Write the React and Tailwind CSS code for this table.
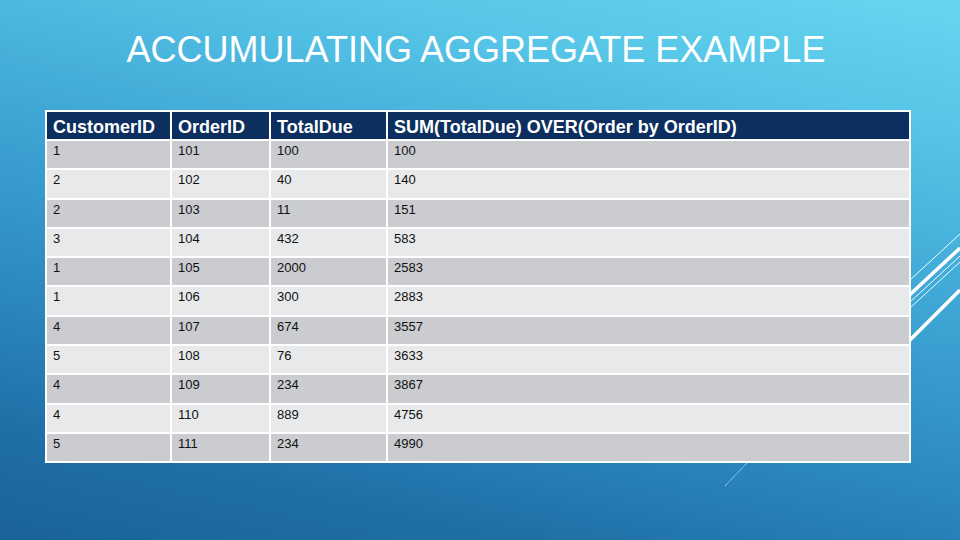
import React from "react";

const rows = [
  ["1", "101", "100", "100"],
  ["2", "102", "40", "140"],
  ["2", "103", "11", "151"],
  ["3", "104", "432", "583"],
  ["1", "105", "2000", "2583"],
  ["1", "106", "300", "2883"],
  ["4", "107", "674", "3557"],
  ["5", "108", "76", "3633"],
  ["4", "109", "234", "3867"],
  ["4", "110", "889", "4756"],
  ["5", "111", "234", "4990"],
];

const headers = ["CustomerID", "OrderID", "TotalDue", "SUM(TotalDue) OVER(Order by OrderID)"];

export default function App() {
  return (
    <div
      className="relative w-[960px] h-[540px] overflow-hidden bg-[linear-gradient(192deg,#66d6f0_0%,#56c5e7_18%,#3ea6d5_42%,#2b86bd_68%,#1f6fa6_85%,#1a629b_100%)]"
      style={{ fontFamily: '"Liberation Sans", Arial, sans-serif' }}
    >
      <svg className="absolute left-0 top-0" width="960" height="540" viewBox="0 0 960 540">
        <line x1="860" y1="326" x2="960" y2="234" stroke="#eefcff" strokeWidth="1" />
        <line x1="860" y1="341" x2="960" y2="248" stroke="#ffffff" strokeWidth="3.5" />
        <line x1="860" y1="348" x2="960" y2="256" stroke="#eefcff" strokeWidth="1" />
        <line x1="860" y1="354" x2="960" y2="262" stroke="#eefcff" strokeWidth="1" />
        <line x1="860" y1="390" x2="960" y2="290" stroke="#ffffff" strokeWidth="3.5" />
        <line x1="748" y1="462" x2="725" y2="486" stroke="#d8f4ff" strokeWidth="1" strokeDasharray="1 0.6" />
      </svg>

      <div className="relative flex flex-col pt-[32px]">
        <h1 className="w-full pr-[8px] text-center text-[36px] leading-[36px] font-normal text-white">
          ACCUMULATING AGGREGATE EXAMPLE
        </h1>

        <div className="relative z-10 mt-[42px] ml-[45px] w-[866px] bg-white p-[2px]">
          <div className="grid grid-cols-[123px_97px_115px_521px] gap-[2px]">
            {headers.map((h) => (
              <div
                key={h}
                className="h-[27px] bg-[#0c2f5f] pl-[6px] pt-[4px] text-[18px] leading-[22px] font-bold text-white whitespace-nowrap"
              >
                {h}
              </div>
            ))}
            {rows.map((r, i) =>
              r.map((c, j) => (
                <div
                  key={i + "-" + j}
                  className={
                    (i % 2 === 0 ? "bg-[#cbccd0]" : "bg-[#e8e9ea]") +
                    " h-[27.3px] pl-[6px] pt-[2px] text-[13px] leading-[16px] text-[#111111]"
                  }
                >
                  {c}
                </div>
              ))
            )}
          </div>
        </div>
      </div>
    </div>
  );
}
